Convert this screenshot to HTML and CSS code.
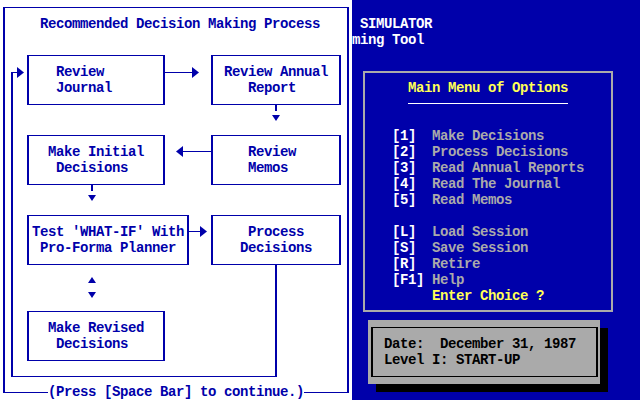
FILE: index.html
```html
<!DOCTYPE html>
<html lang="en">
<head>
    <meta charset="UTF-8">
    <title>Simulator - Main Menu</title>
    <link rel="stylesheet" href="styles.css">
</head>
<body>
    <div class="screen">
        <div class="chart">
            <div class="frame"></div>
            <svg class="wires" viewBox="0 0 352 400" width="352" height="400">
                <g class="line">
                    <rect x="165" y="72" width="27" height="1"/>
                    <rect x="275" y="104" width="2" height="7"/>
                    <rect x="183" y="151" width="29" height="1"/>
                    <rect x="91" y="184" width="2" height="7"/>
                    <rect x="189" y="231" width="11" height="1"/>
                    <rect x="275" y="264" width="2" height="113"/>
                    <rect x="11" y="376" width="266" height="1"/>
                    <rect x="11" y="72" width="2" height="305"/>
                    <rect x="11" y="72" width="6" height="1"/>
                </g>
                <g class="head">
                    <polygon points="192,67 199,72.5 192,78"/>
                    <polygon points="17,67 24,72.5 17,78"/>
                    <polygon points="272,115 280,115 276,121"/>
                    <polygon points="183,146 176,151.5 183,157"/>
                    <polygon points="88,195 96,195 92,201"/>
                    <polygon points="200,226 207,231.5 200,237"/>
                    <polygon points="88,283 96,283 92,277"/>
                    <polygon points="88,292 96,292 92,298"/>
                </g>
            </svg>
            <div class="title">Recommended Decision Making Process</div>

            <div class="step journal"><span>   Review</span><span>   Journal</span></div>
            <div class="step annual"><span> Review Annual</span><span>    Report</span></div>
            <div class="step initial"><span>  Make Initial</span><span>   Decisions</span></div>
            <div class="step memos"><span>    Review</span><span>    Memos</span></div>
            <div class="step whatif"><span>Test 'WHAT-IF' With</span><span> Pro-Forma Planner</span></div>
            <div class="step process"><span>    Process</span><span>   Decisions</span></div>
            <div class="step revised"><span>  Make Revised</span><span>   Decisions</span></div>

            <div class="footer">(Press [Space Bar] to continue.)</div>
        </div>

        <div class="side">
            <div class="banner"><span> SIMULATOR</span><span>ming Tool</span></div>

            <div class="menu">
                <div class="heading">Main Menu of Options</div>
                <div class="rule"></div>
                <div class="options">
                    <div class="opt"><span class="key">[1]</span>  <span>Make Decisions</span></div>
                    <div class="opt"><span class="key">[2]</span>  <span>Process Decisions</span></div>
                    <div class="opt"><span class="key">[3]</span>  <span>Read Annual Reports</span></div>
                    <div class="opt"><span class="key">[4]</span>  <span>Read The Journal</span></div>
                    <div class="opt"><span class="key">[5]</span>  <span>Read Memos</span></div>
                    <div class="gap"></div>
                    <div class="opt"><span class="key">[L]</span>  <span>Load Session</span></div>
                    <div class="opt"><span class="key">[S]</span>  <span>Save Session</span></div>
                    <div class="opt"><span class="key">[R]</span>  <span>Retire</span></div>
                    <div class="opt"><span class="key">[F1]</span> <span>Help</span></div>
                    <div class="opt prompt">     Enter Choice ?</div>
                </div>
            </div>

            <div class="status">
                <div class="status-inner">
                    <div class="status-line">Date:  December 31, 1987</div>
                    <div class="status-line">Level I: START-UP</div>
                </div>
            </div>
        </div>
    </div>
</body>
</html>
```

FILE: styles.css
```css
body {
    margin: 0;
    padding: 0;
    background-color: #0000aa;
    font-family: "Liberation Mono", "DejaVu Sans Mono", monospace;
    font-size: 14px;
    font-weight: bold;
    letter-spacing: -0.4px;
    line-height: 16px;
    overflow: hidden;
}
.screen {
    display: grid;
    grid-template-columns: 352px 288px;
    width: 640px;
    height: 400px;
}

/* left panel: flow chart on an 8x16 character grid */
.chart {
    background-color: #ffffff;
    color: #0000aa;
    display: grid;
    grid-template-columns: repeat(44, 8px);
    grid-template-rows: repeat(25, 16px);
}
.frame {
    grid-area: 1 / 1 / -1 / -1;
    margin: 7px 3px;
    border: solid #0000aa;
    border-width: 1px 2px;
}
.wires {
    grid-area: 1 / 1 / -1 / -1;
    display: block;
}
.wires .line {
    fill: #0000aa;
    shape-rendering: crispEdges;
}
.wires .head {
    fill: #0000aa;
}
.title {
    grid-row: 2;
    grid-column: 6 / span 35;
    white-space: pre;
}
.footer {
    grid-row: 25;
    grid-column: 7 / span 32;
    background-color: #ffffff;
    white-space: pre;
}
.step {
    margin: 7px 3px;
    border: solid #0000aa;
    border-width: 1px 2px;
    padding: 8px 0 0 3px;
    white-space: pre;
}
.step span {
    display: block;
}
.journal { grid-column: 4 / 22; grid-row: 4 / 8; }
.annual  { grid-column: 27 / 44; grid-row: 4 / 8; }
.initial { grid-column: 4 / 22; grid-row: 9 / 13; }
.memos   { grid-column: 27 / 44; grid-row: 9 / 13; }
.whatif  { grid-column: 4 / 25; grid-row: 14 / 18; }
.process { grid-column: 27 / 44; grid-row: 14 / 18; }
.revised { grid-column: 4 / 22; grid-row: 20 / 24; }

/* right panel */
.side {
    background-color: #0000aa;
    color: #ffffff;
    padding-top: 16px;
}
.banner span {
    display: block;
    white-space: pre;
}
.menu {
    box-sizing: border-box;
    margin: 23px 0 0 11px;
    width: 250px;
    height: 241px;
    border: 2px solid #aaaaaa;
    padding: 7px 0 0 27px;
}
.heading {
    color: #ffff55;
    margin-left: 16px;
}
.rule {
    width: 160px;
    height: 1px;
    background-color: #ffffff;
    margin: 7px 0 0 16px;
}
.options {
    margin-top: 24px;
}
.opt {
    white-space: pre;
    color: #aaaaaa;
}
.opt .key {
    color: #ffffff;
}
.opt.prompt {
    color: #ffff55;
}
.gap {
    height: 16px;
}
.status {
    box-sizing: border-box;
    margin: 8px 0 0 16px;
    width: 232px;
    height: 64px;
    background-color: #aaaaaa;
    box-shadow: 8px 8px 0 #000000;
    padding: 7px 2px 7px 3px;
    color: #000000;
}
.status-inner {
    box-sizing: border-box;
    height: 100%;
    border: solid #000000;
    border-width: 1px 2px;
    padding: 8px 0 0 11px;
}
.status-line {
    white-space: pre;
}
```
